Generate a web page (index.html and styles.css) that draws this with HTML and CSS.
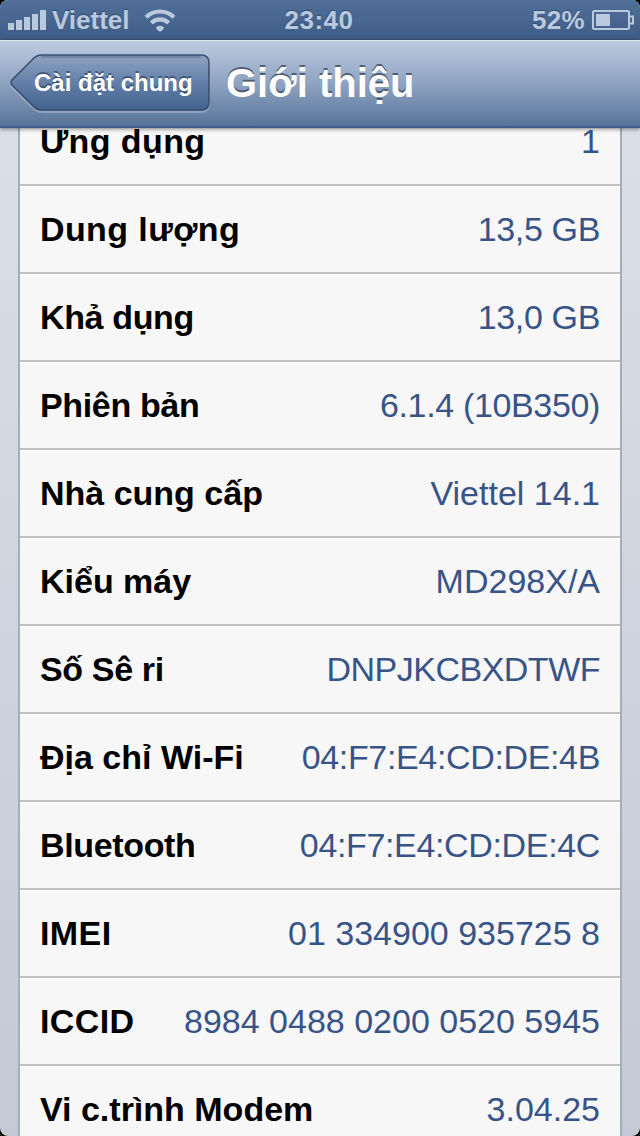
FILE: index.html
```html
<!DOCTYPE html>
<html lang="vi">
<head>
    <meta charset="UTF-8">
    <meta name="viewport" content="width=device-width, initial-scale=1.0">
    <title>Giới thiệu</title>
    <link rel="stylesheet" href="styles.css">
</head>
<body>
    <div class="screen">
        <div class="status-bar">
            <div class="status-left">
                <svg class="signal" width="38" height="20" viewBox="0 0 38 20">
                    <path d="M0 13h6v7H0zM8 10h6v10H8zM16 7h6v13h-6zM24 4h6v16h-6zM32 0h6v20h-6z" fill="#b9c9de"/>
                </svg>
                <span class="carrier">Viettel</span>
                <svg class="wifi" width="32" height="24" viewBox="0 0 32 24">
                    <g fill="none" stroke="#b9c9de" stroke-width="4.200">
                        <path d="M2 9.2a20 20 0 0 1 28 0"/>
                        <path d="M7.4 15a12.2 12.2 0 0 1 17.2 0"/>
                    </g>
                    <path d="M11.8 19.400a6 6 0 0 1 8.400 0Q18 23.500 16 23.500T11.800 19.400z" fill="#b9c9de"/>
                </svg>
            </div>
            <div class="clock">23:40</div>
            <div class="status-right">
                <span class="percent">52%</span>
                <svg class="battery" width="42" height="20" viewBox="0 0 42 20">
                    <rect x="1" y="1" width="36" height="18" rx="1.5" fill="none" stroke="#b9c9de" stroke-width="2"/>
                    <rect x="4" y="4" width="14" height="12" fill="#b9c9de"/>
                    <path d="M37 6.500h4v7h-4" fill="none" stroke="#b9c9de" stroke-width="2"/>
                </svg>
            </div>
        </div>

        <header class="nav-bar">
            <a class="back-btn">
                <svg class="back-shape" width="202" height="62" viewBox="0 0 202 62">
                    <defs>
                        <linearGradient id="back-fill" x1="0" y1="0" x2="0" y2="1">
                            <stop offset="0" stop-color="#8fa3c1"/>
                            <stop offset="0.5" stop-color="#637fa9"/>
                            <stop offset="1" stop-color="#42628f"/>
                        </linearGradient>
                    </defs>
                    <path d="M32 3H191Q199 3 199 11V51Q199 59 191 59H32Q26 59 22 54L2 34Q0 31 2 28L22 8Q26 3 32 3Z" fill="none" stroke="#a9b9d0" stroke-width="2" opacity="0.6"/>
                    <path d="M32 2H191Q199 2 199 10V49Q199 57 191 57H32Q26 57 22 52L2 32Q0 30 2 27L22 7Q26 2 32 2Z" fill="url(#back-fill)" stroke="#3a4d6c" stroke-width="1.500"/>
                    <path d="M31 4H191" stroke="#2b3a55" stroke-width="2" opacity="0.25"/>
                </svg>
                <span class="back-label">Cài đặt chung</span>
            </a>
            <h1>Giới thiệu</h1>
        </header>

        <main class="content">
            <ul class="list">
                <li class="row"><span class="label wide">Ứng dụng</span><span class="value">1</span></li>
                <li class="row"><span class="label wide">Dung lượng</span><span class="value tight">13,5 GB</span></li>
                <li class="row"><span class="label tight">Khả dụng</span><span class="value tight">13,0 GB</span></li>
                <li class="row"><span class="label tight">Phiên bản</span><span class="value tight">6.1.4 (10B350)</span></li>
                <li class="row"><span class="label">Nhà cung cấp</span><span class="value">Viettel 14.1</span></li>
                <li class="row"><span class="label">Kiểu máy</span><span class="value">MD298X/A</span></li>
                <li class="row"><span class="label tight">Số Sê ri</span><span class="value tighter">DNPJKCBXDTWF</span></li>
                <li class="row"><span class="label">Địa chỉ Wi-Fi</span><span class="value tight">04:F7:E4:CD:DE:4B</span></li>
                <li class="row"><span class="label tight">Bluetooth</span><span class="value tight">04:F7:E4:CD:DE:4C</span></li>
                <li class="row"><span class="label wide">IMEI</span><span class="value">01 334900 935725 8</span></li>
                <li class="row"><span class="label wide">ICCID</span><span class="value">8984 0488 0200 0520 5945</span></li>
                <li class="row"><span class="label">Vi c.trình Modem</span><span class="value">3.04.25</span></li>
            </ul>
        </main>
    </div>
</body>
</html>
```
FILE: styles.css
```css
body {
    margin: 0;
    background: #000;
    font-family: "Liberation Sans", Arial, sans-serif;
}

.screen {
    display: flex;
    flex-direction: column;
    width: 640px;
    height: 1136px;
    border-radius: 8px;
    overflow: hidden;
    background: linear-gradient(#dde1eb, #c4c9d6);
}

/* status bar */
.status-bar {
    display: grid;
    grid-template-columns: 1fr auto 1fr;
    align-items: center;
    height: 40px;
    padding: 0 6px 0 8px;
    box-sizing: border-box;
    background: linear-gradient(#506f99, #3f5c86);
    color: #b9c9de;
    font-size: 26px;
    font-weight: bold;
    line-height: 40px;
    text-shadow: 0 -1px 1px rgba(30, 50, 85, 0.5);
}

.status-left,
.status-right {
    display: flex;
    align-items: center;
}

.status-right {
    justify-content: flex-end;
}

.clock {
    padding-right: 4px;
    letter-spacing: 0.5px;
}

.carrier {
    margin-left: 6px;
}

.wifi {
    margin-left: 14px;
}

.percent {
    letter-spacing: 0.3px;
}

.battery {
    margin-left: 7px;
}

/* navigation bar */
.nav-bar {
    position: relative;
    z-index: 1;
    display: flex;
    align-items: center;
    height: 88px;
    box-sizing: border-box;
    padding-left: 10px;
    border-top: 1px solid #dbe6f3;
    border-bottom: 2px solid #405b84;
    background: linear-gradient(#bdcbdf, #8ea3c2 50%, #587399);
    box-shadow: 0 1px 4px rgba(0, 0, 0, 0.5);
    color: #fff;
}

.back-btn {
    display: grid;
    align-items: center;
    width: 202px;
    height: 62px;
}

.back-shape,
.back-label {
    grid-area: 1 / 1;
}

.back-label {
    padding: 0 0 2px 24px;
    font-size: 24px;
    font-weight: bold;
    white-space: nowrap;
    text-shadow: 0 -2px 0 rgba(40, 55, 80, 0.6);
}

.nav-bar h1 {
    margin: 0 0 2px 14px;
    font-size: 40px;
    line-height: 46px;
    white-space: nowrap;
    text-shadow: 0 -2px 0 rgba(50, 60, 80, 0.7);
}

/* grouped list, scrolled part way under the bar */
.content {
    flex: 1;
    min-height: 0;
    overflow: hidden;
}

.list {
    margin: -30px 18px 0;
    padding: 0;
    list-style: none;
    border: solid #a5acba;
    border-width: 0 2px;
    background: #f7f7f7;
}

.row {
    display: flex;
    align-items: center;
    justify-content: space-between;
    height: 88px;
    box-sizing: border-box;
    padding: 0 20px 2px;
    border-top: 2px solid #fdfdfd;
    border-bottom: 2px solid #c3c3c5;
    font-size: 34px;
    white-space: nowrap;
}

.label {
    color: #000;
    font-weight: bold;
}

.value {
    color: #385487;
}

.wide {
    letter-spacing: 0.4px;
}

.tight {
    letter-spacing: -0.35px;
}

.tighter {
    letter-spacing: -0.5px;
}
```
